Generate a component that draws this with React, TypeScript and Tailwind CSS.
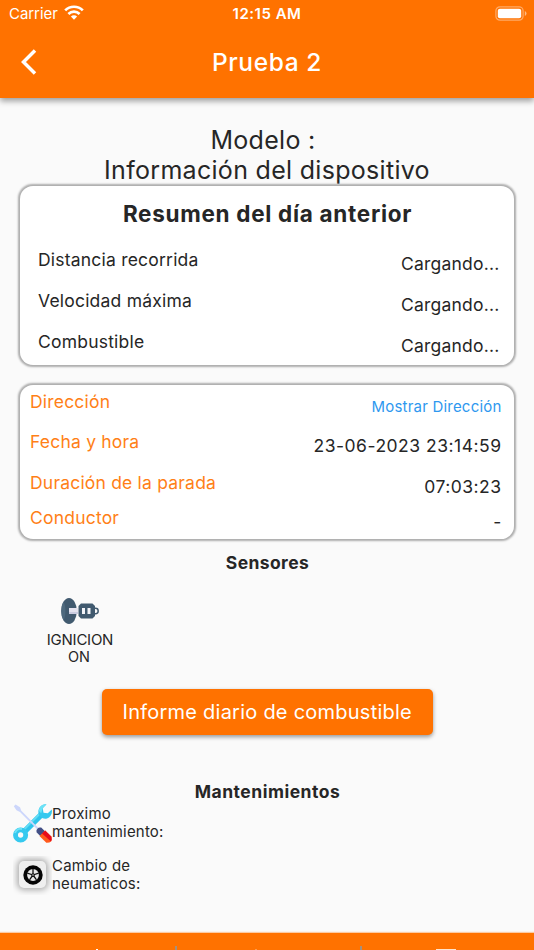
import type { ReactNode } from 'react'

function StatusBar() {
  return (
    <div className="grid h-7 grid-cols-3 items-center text-[15px] leading-7">
      <div className="flex items-center gap-[6px] pl-[9px]">
        <span className="tracking-[-0.05px]">Carrier</span>
        <svg width="20" height="15" viewBox="0 0 20 15" fill="none" stroke="white" strokeWidth="2.7" className="-mt-[3px]">
          <path d="M1.2 5.4a12.4 12.4 0 0 1 17.6 0" />
          <path d="M4.4 9a8 8 0 0 1 11.2 0" />
          <path d="M10 14.8 6.9 11.600a4.4 4.4 0 0 1 6.2 0Z" fill="white" stroke="none" />
        </svg>
      </div>
      <div className="text-center font-semibold tracking-[0.5px]">12:15 AM</div>
      <div className="flex justify-end pr-[7px]">
        <svg width="32" height="15" viewBox="0 0 32 15" fill="none" className="-mt-[2px]">
          <rect x="0.9" y="0.8" width="27.2" height="13.4" rx="4" stroke="white" strokeOpacity="0.4" strokeWidth="1.2" />
          <rect x="2.8" y="2.8" width="23.4" height="9.4" rx="2" fill="white" />
          <path d="M29.8 5v5q1.7-.8 1.7-2.5T29.8 5Z" fill="white" fillOpacity="0.5" />
        </svg>
      </div>
    </div>
  )
}

function Header() {
  return (
    <header className="relative z-10 h-[98px] shrink-0 bg-[#ff7200] text-white shadow-[0_3px_6px_rgba(0,0,0,0.38)]">
      <StatusBar />
      <div className="grid h-[69px] grid-cols-[60px_1fr_60px] items-center">
        <svg width="16" height="26" viewBox="0 0 16 26" fill="none" stroke="white" strokeWidth="3.500" className="-mt-[2px] ml-[21px]">
          <path d="M14 1.500 2.500 13 14 24.500" />
        </svg>
        <h1 className="text-center text-[24.500px] font-medium tracking-[0.6px]">Prueba 2</h1>
      </div>
    </header>
  )
}

function Card({ children, className }: { children: ReactNode; className: string }) {
  return (
    <section className={`mx-5 shrink-0 rounded-[13px] bg-white shadow-[0_0_2px_1.500px_#adadad] ${className}`}>
      {children}
    </section>
  )
}

function Row({ label, children, className }: { label: string; children: ReactNode; className: string }) {
  return (
    <div className={`flex justify-between ${className}`}>
      <span>{label}</span>
      {children}
    </div>
  )
}

function IgnitionIcon() {
  return (
    <svg width="40" height="28" viewBox="0 0 40 28">
      <ellipse cx="9" cy="14" rx="7.8" ry="13" fill="#415a6f" />
      <path d="M3.6 4.6C.7 8.600.5 19.400 3.600 23.400 6 19 6 9 3.600 4.600Z" fill="#4e697e" />
      <path d="M9 11h9v6H9Z" fill="#e4e3ef" />
      <path d="M9 15h9v2H9Z" fill="#c9cbdf" />
      <path d="M21 6.500h11.500l2.500 2.500v10l-2.500 2.500H21L18.500 19V9Z" fill="#415a6f" />
      <path d="M34 11.300h1.500a2.700 2.700 0 0 1 0 5.400H34" fill="none" stroke="#415a6f" strokeWidth="1.500" />
      <path d="M22 11h3v6h-3ZM27.500 11h3v6h-3Z" fill="#f2f3f8" />
    </svg>
  )
}

function ToolsIcon() {
  return (
    <svg width="39" height="39" viewBox="0 0 39 39" className="shrink-0">
      <path d="M11 28 29 10" stroke="#2fc4ec" strokeWidth="6" />
      <path d="M10 26.500 28 8.500" stroke="#62dcf5" strokeWidth="1.800" />
      <circle cx="7.600" cy="31" r="5.100" fill="none" stroke="#35c9ef" strokeWidth="4.900" />
      <path d="M2 29a6 6 0 0 1 7-4" fill="none" stroke="#6ce2f6" strokeWidth="2" />
      <path d="M33.500.3 29.700 4.300l.8 4.400 4.300.6 3.900-3.800c1 4-1 8-4.700 9-2.400.7-4.700 0-6.500-1.700-2.100-2.100-2.700-5-1.700-7.600C26.900 1.900 30-.5 33.500.3Z" fill="#35c9ef" />
      <path d="M33.500.3 29.700 4.300l-1.500 5-2.500-2.500C26.300 2.500 29.700-.5 33.500.3Z" fill="#6ce2f6" />
      <path d="M2.600.5 7 3.300 8.300 6.700 26.500 25l-1.400 1.300L7 8 3.500 6.300.8 2.300Z" fill="#ccd6fb" />
      <path d="m28.200 23.600 4 4-4.700 4.600-4-4q-.6-2.500 1.200-3.600 1-1.600 3.500-1Z" fill="#424f86" />
      <path d="m32.200 26.500 6.300 6.300q.5 3.500-.5 4.700-1.200 1.300-4.700 1.200l-6.800-6.700Z" fill="#ff5a1c" />
      <path d="m32.200 26.500 6.300 6.300q.5 3.500-.5 4.700L29 29.500Z" fill="#e60c1c" />
    </svg>
  )
}

function TireIcon() {
  return (
    <div className="flex size-[39px] shrink-0 items-center justify-center overflow-hidden pb-px">
      <div className="flex size-[27px] items-center justify-center rounded-[5px] bg-[#efefef] shadow-[0_0_6px_2px_rgba(0,0,0,0.32)]">
        <svg width="20" height="20" viewBox="0 0 20 20" className="shrink-0">
          <circle cx="10" cy="10" r="9.700" fill="#050505" />
          <circle cx="10" cy="10" r="5.900" fill="#e8e8e8" />
          <path d="M10 10V4M10 10l5.700-1.900M10 10l3.500 4.900M10 10l-3.500 4.900M10 10 4.300 8.100" stroke="#111" strokeWidth="1.300" />
          <circle cx="10" cy="10" r="1.800" fill="#111" />
          <circle cx="10" cy="10" r="0.700" fill="#eee" />
        </svg>
      </div>
    </div>
  )
}

function BottomBar() {
  return (
    <footer className="mt-auto h-[17px] shrink-0 overflow-hidden bg-[#ff7200] pt-[13px] shadow-[0_-1px_1px_rgba(255,114,0,0.35)]">
      <div className="flex h-1 items-end *:shrink-0">
        <i className="ml-24 h-px w-0.5 bg-white" />
        <i className="ml-[77px] h-1 w-0.5 bg-[#a39080]" />
        <i className="ml-[78px] h-px w-0.5 bg-white/30" />
        <i className="ml-[103px] h-1 w-0.5 bg-[#a39080]" />
        <i className="ml-[74px] h-px w-5 bg-white/80" />
      </div>
    </footer>
  )
}

export default function App() {
  return (
    <div className="flex h-[950px] w-full flex-col overflow-hidden bg-[#fafafa] font-[Inter,sans-serif] text-[#262626]">
      <Header />

      <div className="mt-[26.500px] shrink-0 text-center text-[25px] leading-[30.500px] tracking-[0.3px]">
        <p className="-ml-2">Modelo :</p>
        <p>Información del dispositivo</p>
      </div>

      <Card className="h-[179px] pt-[13px]">
        <h2 className="pl-px text-center text-[22.500px] leading-[30px] font-bold tracking-[0.7px]">
          Resumen del día anterior
        </h2>
        <div className="pr-[14.500px] pl-[18px] text-[17.500px] leading-[22px] tracking-[0.21px]">
          <Row label="Distancia recorrida" className="mt-5 h-[41.300px]">
            <span className="pt-1 tracking-[0.22px]">Cargando...</span>
          </Row>
          <Row label="Velocidad máxima" className="h-[41.300px]">
            <span className="pt-1 tracking-[0.22px]">Cargando...</span>
          </Row>
          <Row label="Combustible" className="h-[24px]">
            <span className="pt-1 tracking-[0.22px]">Cargando...</span>
          </Row>
        </div>
      </Card>

      <Card className="mt-5 h-[154px] pt-[6.500px]">
        <div className="pr-[12.500px] pl-[10px] text-[17.500px] leading-[22px] tracking-[0.2px] [&>div>span:first-child]:text-[#ff7f17]">
          <Row label="Dirección" className="h-[40px]">
            <span className="pt-[5px] text-[15px] text-[#2e98ef]">Mostrar Dirección</span>
          </Row>
          <Row label="Fecha y hora" className="h-[41px]">
            <span className="pt-1 tracking-[0.5px]">23-06-2023 23:14:59</span>
          </Row>
          <Row label="Duración de la parada" className="h-[34.600px]">
            <span className="pt-1 tracking-[0.48px]">07:03:23</span>
          </Row>
          <Row label="Conductor" className="h-[26px]">
            <span className="pt-1">-</span>
          </Row>
        </div>
      </Card>

      <h3 className="mt-[13px] shrink-0 pl-px text-center text-[17.500px] leading-[22px] font-bold tracking-[0.4px]">Sensores</h3>

      <div className="mt-[23px] ml-10 flex w-20 shrink-0 flex-col items-center text-[15px] leading-[17px] tracking-[-0.24px]">
        <IgnitionIcon />
        <span className="mt-[6px]">IGNICION</span>
        <span className="-ml-0.5 text-[14.500px] tracking-normal">ON</span>
      </div>

      <button className="mt-6 ml-[101.500px] h-[46.500px] w-[331.500px] shrink-0 rounded-[5px] bg-[#ff7200] text-[20px] font-normal tracking-[0.24px] text-white shadow-[0_2px_4px_rgba(0,0,0,0.4)]">
        Informe diario de combustible
      </button>

      <h3 className="mt-[45.500px] shrink-0 pl-px text-center text-[17.500px] leading-[22px] font-bold tracking-[0.52px]">
        Mantenimientos
      </h3>

      <div className="ml-[13px] flex shrink-0 flex-col gap-[13px] text-[15px] leading-[18px] tracking-[0.19px]">
        <div className="mt-px flex">
          <ToolsIcon />
          <p className="mt-px">Proximo<br />mantenimiento:</p>
        </div>
        <div className="flex">
          <TireIcon />
          <p className="mt-[1.500px]">Cambio de<br />neumaticos:</p>
        </div>
      </div>

      <BottomBar />
    </div>
  )
}
